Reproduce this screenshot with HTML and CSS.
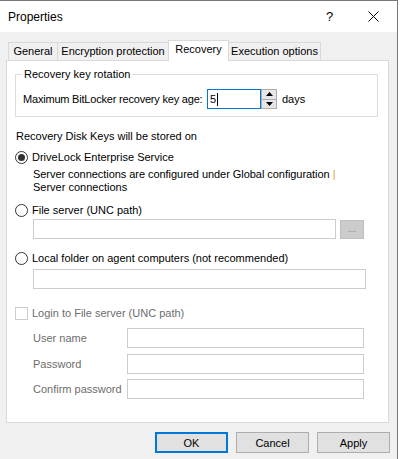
FILE: index.html
```html
<!DOCTYPE html>
<html>
<head>
<meta charset="utf-8">
<link rel="stylesheet" href="styles.css">
</head>
<body>
<div class="window">
  <div class="titlebar">
    <span class="title">Properties</span>
    <span class="help">?</span>
    <span class="close">
      <svg width="11" height="11" viewBox="0 0 11 11"><path d="M0.5 0.5 L10.5 10.5 M10.5 0.5 L0.5 10.5" stroke="#000" stroke-width="1" fill="none"/></svg>
    </span>
  </div>
  <div class="client">
    <div class="tabs">
      <div class="tab t-general">General</div>
      <div class="tab t-enc">Encryption protection</div>
      <div class="tab t-rec selected">Recovery</div>
      <div class="tab t-exec">Execution options</div>
    </div>
    <div class="panel">
      <div class="group">
        <div class="group-title">Recovery key rotation</div>
        <div class="age-row">
          <span class="age-label">Maximum BitLocker recovery key age:</span>
          <span class="age-input">5<span class="caret"></span></span>
          <span class="spinner">
            <span class="spin up"><svg width="7" height="4" viewBox="0 0 7 4"><path d="M3.5 0 L7 4 L0 4 Z" fill="#000"/></svg></span>
            <span class="spin down"><svg width="7" height="4" viewBox="0 0 7 4"><path d="M0 0 L7 0 L3.5 4 Z" fill="#000"/></svg></span>
          </span>
          <span class="days">days</span>
        </div>
      </div>

      <div class="stored">Recovery Disk Keys will be stored on</div>

      <div class="radio-row r1">
        <span class="radio checked"><span class="dot"></span></span>
        <span class="rlabel">DriveLock Enterprise Service</span>
      </div>
      <div class="note n1">Server connections are configured under Global configuration <span class="pipe">|</span></div>
      <div class="note">Server connections</div>

      <div class="radio-row r2">
        <span class="radio"></span>
        <span class="rlabel">File server (UNC path)</span>
      </div>
      <div class="path-row">
        <span class="field path-field"></span>
        <span class="browse">...</span>
      </div>

      <div class="radio-row r3">
        <span class="radio"></span>
        <span class="rlabel">Local folder on agent computers (not recommended)</span>
      </div>
      <div class="local-row">
        <span class="field local-field"></span>
      </div>

      <div class="check-row">
        <span class="checkbox"></span>
        <span class="clabel">Login to File server (UNC path)</span>
      </div>
      <div class="cred-row c1">
        <span class="cred-label">User name</span>
        <span class="field cred-field"></span>
      </div>
      <div class="cred-row c2">
        <span class="cred-label">Password</span>
        <span class="field cred-field"></span>
      </div>
      <div class="cred-row c3">
        <span class="cred-label">Confirm password</span>
        <span class="field cred-field"></span>
      </div>
    </div>
    <div class="buttons">
      <span class="btn default">OK</span>
      <span class="btn">Cancel</span>
      <span class="btn">Apply</span>
    </div>
  </div>
</div>
</body>
</html>
```

FILE: styles.css
```css
* { box-sizing: border-box; }
html, body { margin: 0; padding: 0; background: #ffffff; }
body {
  width: 400px;
  height: 459px;
  overflow: hidden;
  font-family: "Liberation Sans", Arial, sans-serif;
  font-size: 11px;
  color: #000;
  white-space: nowrap;
}
.window {
  width: 398px;
  height: 459px;
  border-top: 1px solid #777777;
  border-right: 1px solid #777777;
  display: flex;
  flex-direction: column;
}
.titlebar {
  height: 31px;
  background: #ffffff;
  display: flex;
  align-items: center;
  padding-left: 8px;
  flex: none;
}
.title { font-size: 12px; width: 318px; }
.help { font-size: 13px; width: 42px; }
.close { display: flex; align-items: center; }
.client {
  flex: 1;
  background: #f0f0f0;
  padding-top: 8px;
}
.tabs {
  display: flex;
  align-items: flex-end;
  height: 20px;
  padding-left: 8px;
}
.tab {
  height: 18px;
  border: 1px solid #d9d9d9;
  border-bottom: none;
  border-right: none;
  background: #f0f0f0;
  display: flex;
  align-items: center;
  justify-content: center;
  line-height: 13px;
}
.t-general { width: 49px; }
.t-enc { width: 111px; }
.t-rec { width: 61px; }
.t-exec { width: 92px; border-right: 1px solid #d9d9d9; border-left: none; }
.tab.selected {
  height: 21px;
  margin-bottom: -1px;
  background: #ffffff;
  border-right: 1px solid #d9d9d9;
  position: relative;
  z-index: 1;
  align-items: flex-start;
  padding-top: 2px;
}
.panel {
  margin-left: 6px;
  width: 383px;
  height: 363px;
  background: #ffffff;
  border: 1px solid #d9d9d9;
  display: flex;
  flex-direction: column;
}
.group {
  margin: 13px 10px 0 8px;
  height: 43px;
  border: 1px solid #dcdcdc;
  padding-left: 7px;
}
.group-title {
  margin-top: -7px;
  margin-left: -1px;
  padding: 0 2px;
  width: fit-content;
  background: #ffffff;
  line-height: 13px;
}
.age-row {
  margin-top: 8px;
  height: 20px;
  display: flex;
  align-items: center;
}
.age-label { width: 184px; letter-spacing: -0.2px; overflow: hidden; }
.age-input {
  width: 54px;
  height: 20px;
  border: 1px solid #0078d7;
  display: flex;
  align-items: center;
  padding-left: 2px;
}
.caret {
  display: inline-block;
  width: 1px;
  height: 13px;
  background: #000;
  margin-left: 1px;
}
.spinner {
  width: 16px;
  height: 20px;
  display: flex;
  flex-direction: column;
  border: 1px solid #adadad;
  background: #e6e6e6;
}
.spin {
  flex: 1;
  display: flex;
  align-items: center;
  justify-content: center;
}
.spin.up { border-bottom: 1px solid #adadad; }
.days { margin-left: 5px; }
.stored {
  margin: 13px 0 0 9px;
  line-height: 13px;
}
.radio-row {
  display: flex;
  align-items: center;
  height: 14px;
  margin-left: 8px;
}
.r1 { margin-top: 7px; }
.r2 { margin-top: 9px; }
.r3 { margin-top: 12px; }
.radio {
  width: 13px;
  height: 13px;
  border: 1px solid #333333;
  border-radius: 50%;
  display: flex;
  align-items: center;
  justify-content: center;
  background: #fff;
}
.dot {
  width: 7px;
  height: 7px;
  border-radius: 50%;
  background: #333333;
}
.rlabel { margin-left: 4px; }
.note {
  margin-left: 26px;
  line-height: 13px;
}
.n1 { margin-top: 4px; letter-spacing: -0.05px; }
.pipe { color: #e0a030; }
.field {
  display: block;
  height: 20px;
  border: 1px solid #cccccc;
  background: #ffffff;
}
.path-row {
  margin: 2px 0 0 26px;
  display: flex;
  align-items: center;
}
.path-field { width: 303px; }
.browse {
  margin-left: 4px;
  width: 24px;
  height: 19px;
  background: #cccccc;
  border: 1px solid #bfbfbf;
  color: #838383;
  display: flex;
  align-items: center;
  justify-content: center;
  font-size: 10px;
  padding-bottom: 2px;
}
.local-row { margin: 4px 0 0 26px; }
.local-field { width: 333px; }
.check-row {
  margin: 17px 0 0 8px;
  height: 14px;
  display: flex;
  align-items: center;
  color: #6d6d6d;
}
.checkbox {
  width: 13px;
  height: 13px;
  border: 1px solid #cccccc;
  background: #fff;
}
.clabel { margin-left: 4px; }
.cred-row {
  margin-left: 26px;
  display: flex;
  align-items: center;
  height: 20px;
  color: #6d6d6d;
}
.c1 { margin-top: 8px; }
.c2 { margin-top: 6px; }
.c3 { margin-top: 5px; }
.cred-label { width: 94px; }
.cred-field { width: 237px; }
.buttons {
  display: flex;
  justify-content: flex-end;
  gap: 8px;
  margin-top: 9px;
  padding-right: 7px;
}
.btn {
  width: 73px;
  height: 21px;
  background: #e1e1e1;
  border: 1px solid #adadad;
  display: flex;
  align-items: center;
  justify-content: center;
  font-size: 11px;
}
.btn.default { border: 2px solid #0078d7; }
```
